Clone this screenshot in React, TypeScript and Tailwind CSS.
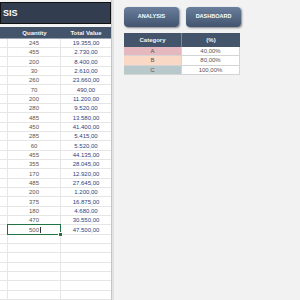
import React from "react";

const rows: [string, string][] = [
  ["245", "19.355,00"],
  ["455", "2.730,00"],
  ["200", "8.400,00"],
  ["30", "2.610,00"],
  ["260", "23.660,00"],
  ["70", "490,00"],
  ["200", "11.200,00"],
  ["280", "9.520,00"],
  ["485", "13.580,00"],
  ["450", "41.400,00"],
  ["285", "5.415,00"],
  ["60", "5.520,00"],
  ["455", "44.135,00"],
  ["355", "28.045,00"],
  ["170", "12.920,00"],
  ["485", "27.645,00"],
  ["200", "1.200,00"],
  ["375", "16.875,00"],
  ["180", "4.680,00"],
  ["470", "30.550,00"],
  ["500", "47.500,00"],
];

const cats: [string, string, string][] = [
  ["A", "40,00%", "bg-[#e5b8bf]"],
  ["B", "80,00%", "bg-[#f9d8c6]"],
  ["C", "100,00%", "bg-[#b9c8ca]"],
];

export default function App() {
  return (
    <div className="w-[300px] h-[300px] bg-[#f2f2f2] flex overflow-hidden font-['Liberation_Sans',Arial,sans-serif]">
      {/* Left sheet */}
      <div className="w-[111px] flex flex-col shrink-0">
        <div className="h-[3px]" />
        <div className="h-[26px] bg-[#323e4f] border border-[#111] flex items-center pl-[2px] text-white font-bold text-[9px] leading-none">
          SIS
        </div>
        <div className="h-[4px]" />
        <div className="grid grid-cols-[8px_53px_50px] h-[14px] bg-[#44546a] text-[#f4f6f8] font-bold text-[6px] leading-none border-b border-[#9aa3b0]">
          <div />
          <div className="flex items-center justify-center">Quantity</div>
          <div className="flex items-center justify-center">Total Value</div>
        </div>
        <div className="flex-1 bg-white flex flex-col">
          {rows.map(([q, v], i) => (
            <div
              key={i}
              className="grid grid-cols-[8px_53px_50px] h-[9.33px] shrink-0 text-[6px] leading-none"
            >
              <div className="border-r border-b border-[#e6e6e6]" />
              <div className="relative border-r border-b border-[#e6e6e6] flex items-center justify-center text-[#555]">
                {q}
                {i === rows.length - 1 && (
                  <>
                    <div className="absolute -left-[1px] -top-[1px] right-[-1px] bottom-[-1px] border-[1.5px] border-[#217346]" />
                    <div className="absolute right-[-3px] bottom-[-3px] w-[3px] h-[3px] bg-[#217346] border border-white box-content" />
                    <div className="absolute left-[32px] top-[2px] w-[1px] h-[6px] bg-[#333]" />
                  </>
                )}
              </div>
              <div className="border-b border-[#e6e6e6] flex items-center justify-center text-[#2a4482]">
                {v}
              </div>
            </div>
          ))}
          {Array.from({ length: 7 }).map((_, i) => (
            <div key={"e" + i} className="grid grid-cols-[8px_53px_50px] h-[9.33px] shrink-0">
              <div className="border-r border-b border-[#e6e6e6]" />
              <div className="border-r border-b border-[#e6e6e6]" />
              <div className="border-b border-[#e6e6e6]" />
            </div>
          ))}
        </div>
      </div>
      {/* separator */}
      <div className="w-[1px] bg-[#c6c6c6] shrink-0" />
      <div className="w-[2px] bg-[#e2e2e2] shrink-0" />
      {/* Right area */}
      <div className="flex-1 flex flex-col pl-[10px] pt-[7px]">
        <div className="flex gap-[7px]">
          <div className="w-[55px] h-[20px] rounded-[4px] bg-gradient-to-b from-[#6a7f9d] to-[#42546f] shadow-[1px_1px_2px_rgba(0,0,0,0.45)] flex items-center justify-center text-white font-bold text-[5.5px] leading-none">
            ANALYSIS
          </div>
          <div className="w-[55px] h-[20px] rounded-[4px] bg-gradient-to-b from-[#6a7f9d] to-[#42546f] shadow-[1px_1px_2px_rgba(0,0,0,0.45)] flex items-center justify-center text-white font-bold text-[5.5px] leading-none">
            DASHBOARD
          </div>
        </div>
        <div className="mt-[6px] w-[116px]">
          <div className="grid grid-cols-[58px_58px] h-[14px] bg-[#44546a] text-[#f4f6f8] font-bold text-[6px] leading-none">
            <div className="flex items-center justify-center border-r border-[#7d8899]">Category</div>
            <div className="flex items-center justify-center">(%)</div>
          </div>
          {cats.map(([c, p, bg]) => (
            <div key={c} className="grid grid-cols-[58px_58px] h-[9.33px] text-[6px] leading-none text-[#555]">
              <div className={`${bg} flex items-center justify-center border-b border-r border-[#d4d4d4]`}>{c}</div>
              <div className="bg-white flex items-center justify-center border-b border-r border-[#d4d4d4]">{p}</div>
            </div>
          ))}
        </div>
      </div>
    </div>
  );
}
